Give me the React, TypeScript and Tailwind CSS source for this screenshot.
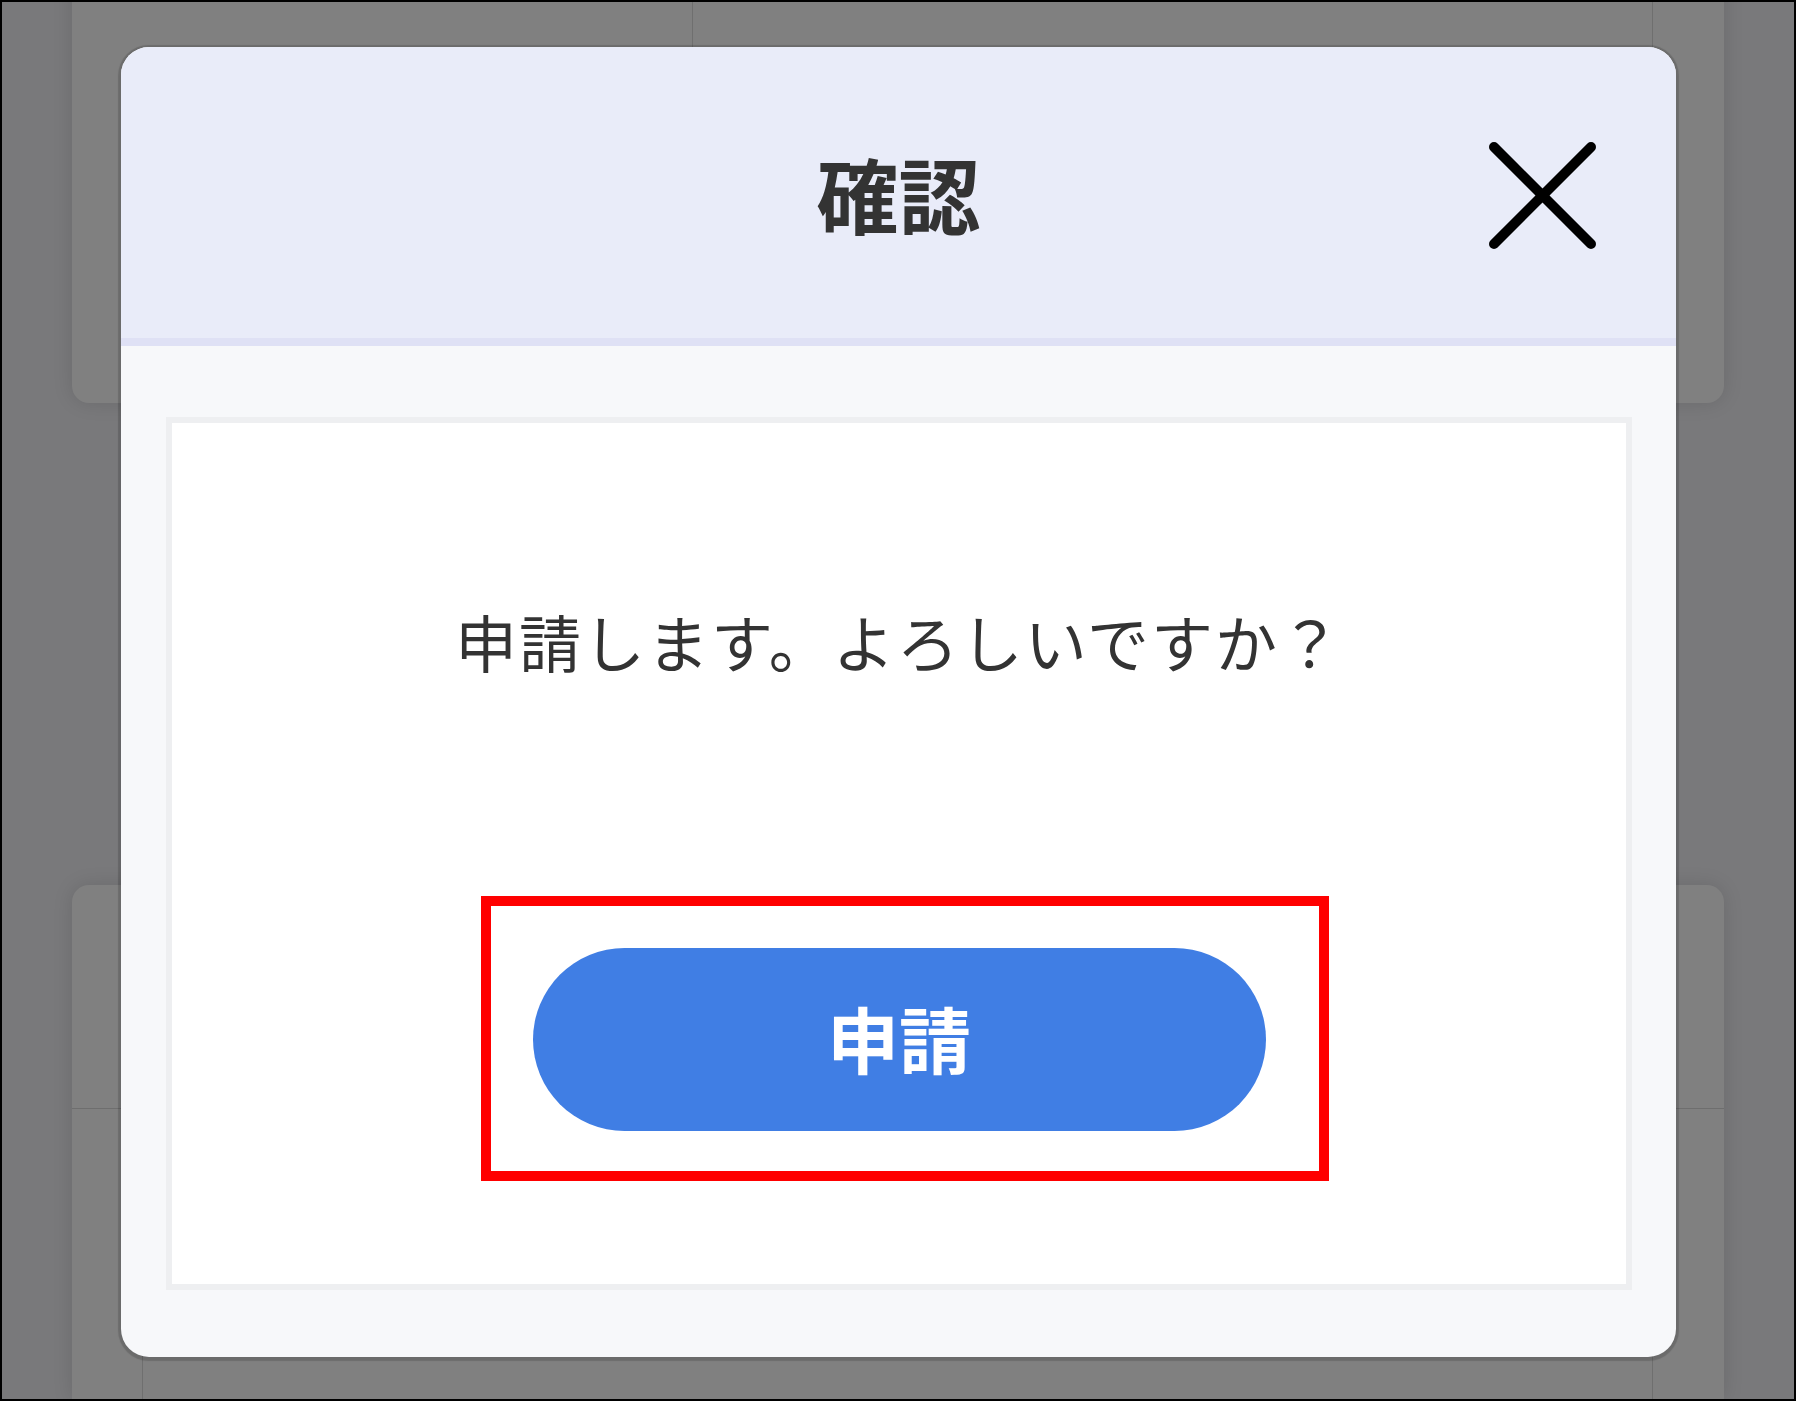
import React from "react";

export default function App() {
  return (
    <div className="relative w-[1796px] h-[1401px] border-2 border-black bg-[#79797b] overflow-hidden font-['Noto_Sans_CJK_JP','Noto_Sans',sans-serif]">
      {/* background page */}
      <div className="flex flex-col h-full px-[70px]">
        <div className="-mt-[20px] h-[421px] shrink-0 rounded-b-[17px] bg-[#808080] shadow-[0_0_20px_rgba(0,0,0,0.12)] grid grid-cols-[621px_960px_1fr]">
          <div className="border-r border-[#6f6f6f]" />
          <div className="border-r border-[#6f6f6f]" />
          <div />
        </div>
        <div className="mt-[482px] flex-1 rounded-t-[17px] bg-[#808080] shadow-[0_0_20px_rgba(0,0,0,0.12)] flex flex-col">
          <div className="h-[224px] shrink-0 border-b border-[#6e6e6e]" />
          <div className="flex-1 grid grid-cols-[71px_1510px_1fr]">
            <div className="border-r border-[#6f6f6f]" />
            <div className="border-r border-[#6f6f6f]" />
            <div />
          </div>
        </div>
      </div>

      {/* modal dialog */}
      <div className="absolute left-[119px] top-[45px] w-[1555px] h-[1310px] rounded-[28px] overflow-hidden bg-[#f7f8fa] shadow-[0_1px_1px_3px_rgba(0,0,0,0.16)] flex flex-col">
        <div className="relative h-[299px] shrink-0 bg-[#e9ecf9] border-b-[8px] border-[#dfe1f5] flex items-center justify-center">
          <h1 className="text-[82px] leading-none font-bold text-[#333333] mt-[1px]">確認</h1>
          <button className="absolute right-[80px] top-[95px] w-[107px] h-[107px]">
            <svg viewBox="0 0 107 107" className="w-[107px] h-[107px]">
              <line x1="5" y1="5" x2="102" y2="102" stroke="#000" strokeWidth="10" strokeLinecap="round" />
              <line x1="102" y1="5" x2="5" y2="102" stroke="#000" strokeWidth="10" strokeLinecap="round" />
            </svg>
          </button>
        </div>
        <div className="flex-1 flex flex-col pt-[71px] pl-[45px] pr-[44px] pb-[67px]">
          <div className="flex-1 border-[6px] border-[#eeeff1] bg-white flex flex-col items-center pt-[172px]">
            <p className="text-[62px] leading-[1.5] tracking-[2px] text-[#333333]">
              申請します。よろしいですか？
            </p>
            <div className="relative mt-[260px] w-[733px] h-[183px]">
              <button className="w-full h-full rounded-full bg-[#407ee4] text-white text-[72px] font-bold leading-none flex items-center justify-center pb-[6px]">
                申請
              </button>
              <div className="absolute -left-[52px] -right-[63px] -top-[52px] -bottom-[50px] border-[10px] border-[#ff0000] pointer-events-none" />
            </div>
          </div>
        </div>
      </div>
    </div>
  );
}
